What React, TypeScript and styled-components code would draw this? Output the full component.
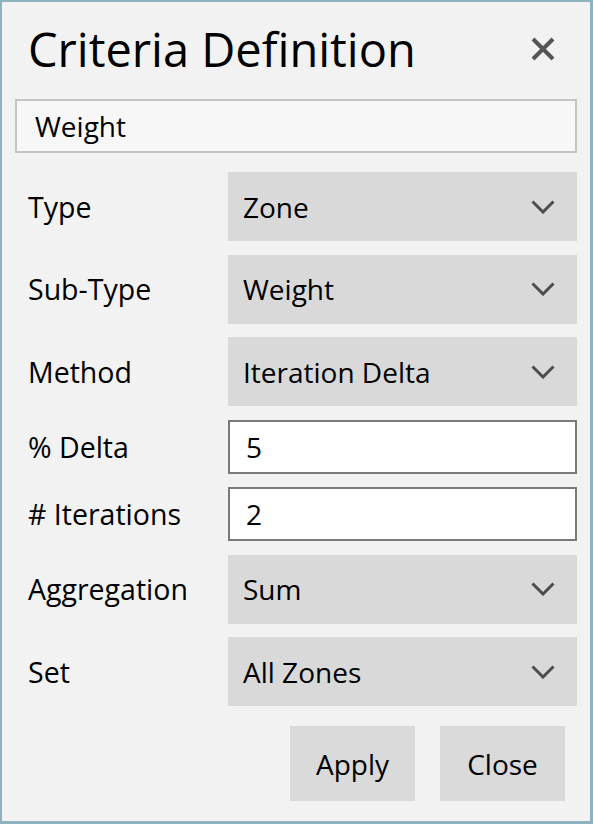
import styled, { createGlobalStyle } from 'styled-components';

const GlobalStyle = createGlobalStyle`
  html, body {
    margin: 0;
    padding: 0;
    background: #f2f2f2;
  }
  * {
    box-sizing: border-box;
  }
`;

type Field =
  | { kind: 'select'; label: string; value: string }
  | { kind: 'input'; label: string; value: string };

const fields: Field[] = [
  { kind: 'select', label: 'Type', value: 'Zone' },
  { kind: 'select', label: 'Sub-Type', value: 'Weight' },
  { kind: 'select', label: 'Method', value: 'Iteration Delta' },
  { kind: 'input', label: '% Delta', value: '5' },
  { kind: 'input', label: '# Iterations', value: '2' },
  { kind: 'select', label: 'Aggregation', value: 'Sum' },
  { kind: 'select', label: 'Set', value: 'All Zones' },
];

function CloseIcon() {
  return (
    <svg width="26" height="26" viewBox="0 0 26 26">
      <path
        d="M3 3 L23 23 M23 3 L3 23"
        stroke="#555"
        strokeWidth="4"
        fill="none"
      />
    </svg>
  );
}

function Chevron() {
  return (
    <svg width="24" height="14" viewBox="0 0 24 14">
      <path
        d="M1.5 1.5 L12 12 L22.5 1.5"
        stroke="#4d4d4d"
        strokeWidth="3"
        fill="none"
      />
    </svg>
  );
}

export default function App() {
  return (
    <>
      <GlobalStyle />
      <Window>
        <Header>
          <Title>Criteria Definition</Title>
          <IconButton aria-label="Close">
            <CloseIcon />
          </IconButton>
        </Header>
        <NameBox defaultValue="Weight" />
        <Form>
          {fields.map((field) => (
            <Row key={field.label}>
              <Label>{field.label}</Label>
              {field.kind === 'select' ? (
                <Select>
                  <span>{field.value}</span>
                  <Chevron />
                </Select>
              ) : (
                <Input defaultValue={field.value} />
              )}
            </Row>
          ))}
        </Form>
        <Footer>
          <Button>Apply</Button>
          <Button>Close</Button>
        </Footer>
      </Window>
    </>
  );
}

const Window = styled.div`
  width: 593px;
  height: 824px;
  border: 2px solid #8fb2c1;
  border-right-width: 3px;
  border-bottom-width: 3px;
  background: #f2f2f2;
  padding: 0 13px 0 13px;
  display: flex;
  flex-direction: column;
  font-family: 'Segoe UI', 'Open Sans', 'Noto Sans', sans-serif;
  color: #000;
`;

const Header = styled.div`
  display: flex;
  align-items: center;
  justify-content: space-between;
  height: 97px;
  padding: 0 21px 4px 13px;
`;

const Title = styled.h1`
  margin: 0;
  font-size: 47px;
  font-weight: 400;
`;

const IconButton = styled.button`
  background: transparent;
  border: none;
  padding: 0;
  margin: 0;
  display: flex;
  cursor: pointer;
`;

const NameBox = styled.input`
  height: 54px;
  width: 100%;
  border: 2px solid #c4c4c4;
  background: #f7f7f7;
  padding: 0 18px;
  font-family: inherit;
  font-size: 28px;
  color: #000;
  outline: none;
`;

const Form = styled.div`
  display: flex;
  flex-direction: column;
  gap: 13.5px;
  margin-top: 19px;
`;

const Row = styled.div`
  display: grid;
  grid-template-columns: 213px 1fr;
  align-items: center;
`;

const Label = styled.div`
  padding-left: 13px;
  font-size: 28.5px;
`;

const Select = styled.div`
  height: 69px;
  background: #d9d9d9;
  display: flex;
  align-items: center;
  justify-content: space-between;
  padding: 0 22px 0 15px;
  font-size: 28px;
`;

const Input = styled.input`
  height: 54px;
  width: 100%;
  border: 2px solid #7a7a7a;
  background: #fff;
  padding: 0 16px;
  font-family: inherit;
  font-size: 28px;
  color: #000;
  outline: none;
`;

const Footer = styled.div`
  display: flex;
  justify-content: flex-end;
  gap: 25px;
  margin-top: 20px;
  padding-right: 12px;
`;

const Button = styled.button`
  width: 125px;
  height: 75px;
  background: #dadada;
  border: none;
  font-family: inherit;
  font-size: 28px;
  color: #000;
  padding: 0;
  cursor: pointer;
`;
